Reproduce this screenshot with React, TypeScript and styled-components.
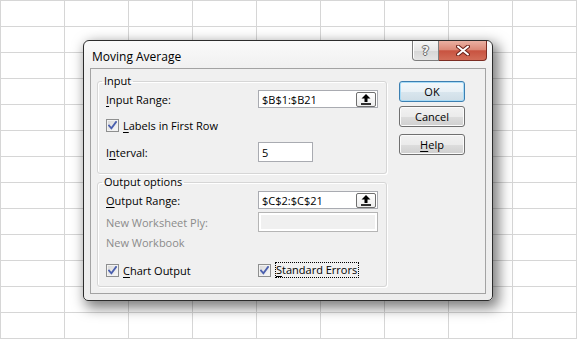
import styled, { createGlobalStyle } from "styled-components";

const GlobalStyle = createGlobalStyle`
  html, body {
    margin: 0;
    padding: 0;
  }

  body {
    font-family: "Open Sans", "Noto Sans", sans-serif;
    color: #000;
  }
`;

function CheckMark() {
  return (
    <svg width="9" height="9" viewBox="0 0 9 9">
      <path
        d="M1 4.6 L3.4 7.4 L8 1"
        fill="none"
        stroke="#4a5fae"
        strokeWidth="1.8"
        strokeLinecap="square"
      />
    </svg>
  );
}

function RefArrow() {
  return (
    <svg width="10" height="11" viewBox="0 0 10 11">
      <polygon points="5,0 9.5,4.5 6.5,4.5 6.5,8 3.5,8 3.5,4.5 0.5,4.5" fill="#000" />
      <rect x="0" y="9.2" width="10" height="1.6" fill="#000" />
    </svg>
  );
}

function CloseGlyph() {
  return (
    <svg width="14" height="11" viewBox="0 0 14 11">
      <path d="M2 1.5 L12 9.5 M12 1.5 L2 9.5" stroke="#6e241b" strokeWidth="4" strokeLinecap="round" />
      <path d="M2 1.5 L12 9.5 M12 1.5 L2 9.5" stroke="#fff" strokeWidth="2" strokeLinecap="round" />
    </svg>
  );
}

function Checkbox() {
  return (
    <CheckBoxFrame>
      <CheckMark />
    </CheckBoxFrame>
  );
}

function App() {
  return (
    <Desktop>
      <GlobalStyle />
      <Window>
        <TitleBar>
          <Title>Moving Average</Title>
          <Captions>
            <HelpCaption>?</HelpCaption>
            <CloseCaption>
              <CloseGlyph />
            </CloseCaption>
          </Captions>
        </TitleBar>
        <Client>
          <LeftColumn>
            <Group $bottom={11}>
              <Legend>Input</Legend>
              <Row $h={18} $mt={0}>
                <FieldLabel>
                  <Key>I</Key>nput Range:
                </FieldLabel>
                <TextBox $w={122} $h={18}>
                  $B$1:$B21
                  <RefButton>
                    <RefArrow />
                  </RefButton>
                </TextBox>
              </Row>
              <Row $h={18} $mt={8}>
                <Checkbox />
                <CheckText>
                  <Key>L</Key>abels in First Row
                </CheckText>
              </Row>
              <Row $h={20} $mt={8}>
                <FieldLabel>
                  I<Key>n</Key>terval:
                </FieldLabel>
                <TextBox $w={55} $h={20}>
                  5
                </TextBox>
              </Row>
            </Group>
            <Group $bottom={7}>
              <Legend>Output options</Legend>
              <Row $h={18} $mt={0}>
                <FieldLabel>
                  <Key>O</Key>utput Range:
                </FieldLabel>
                <TextBox $w={122} $h={18}>
                  $C$2:$C$21
                  <RefButton>
                    <RefArrow />
                  </RefButton>
                </TextBox>
              </Row>
              <Row $h={20} $mt={3}>
                <FieldLabel $disabled>New Worksheet Ply:</FieldLabel>
                <TextBox $w={121} $h={20} $disabled />
              </Row>
              <Row $h={20} $mt={0}>
                <FieldLabel $disabled>New Workbook</FieldLabel>
              </Row>
              <Row $h={18} $mt={9}>
                <CheckCell>
                  <Checkbox />
                  <CheckText>
                    <Key>C</Key>hart Output
                  </CheckText>
                </CheckCell>
                <Checkbox />
                <FocusText>
                  <Key>S</Key>tandard Errors
                </FocusText>
              </Row>
            </Group>
          </LeftColumn>
          <ButtonColumn>
            <DialogButton $default $mt={0}>OK</DialogButton>
            <DialogButton $mt={4}>Cancel</DialogButton>
            <DialogButton $mt={7}>
              <Key>H</Key>elp
            </DialogButton>
          </ButtonColumn>
        </Client>
      </Window>
    </Desktop>
  );
}

export default App;

const Desktop = styled.div`
  width: 577px;
  height: 339px;
  box-sizing: border-box;
  padding: 40px 0 0 83px;
  overflow: hidden;
  background-color: #ffffff;
  background-image: linear-gradient(to right, #d6d6d6 1px, transparent 1px),
    linear-gradient(to bottom, #d6d6d6 1px, transparent 1px);
  background-size: 64px 26px;
`;

const Window = styled.div`
  width: 410px;
  height: 261px;
  box-sizing: border-box;
  border: 1px solid #2c2c2c;
  border-radius: 6px 6px 5px 5px;
  background: linear-gradient(#fafafa, #f0f0f0 28px, #ededed);
  box-shadow: 4px 5px 13px 2px rgba(0, 0, 0, 0.5);
  display: flex;
  flex-direction: column;
`;

const TitleBar = styled.div`
  height: 27px;
  flex-shrink: 0;
  display: flex;
  padding: 0 5px 0 8px;
`;

const Title = styled.div`
  align-self: center;
  margin-top: 4px;
  font-size: 12px;
  line-height: 16px;
`;

const Captions = styled.div`
  margin-left: auto;
  align-self: flex-start;
  display: flex;
  height: 20px;
`;

const HelpCaption = styled.div`
  width: 27px;
  height: 20px;
  box-sizing: border-box;
  border: 1px solid #7d7d7d;
  border-top: none;
  border-radius: 0 0 0 4px;
  background: linear-gradient(#f7f7f7, #e6e6e6 50%, #d6d6d6 52%, #e4e4e4);
  box-shadow: inset 1px 0 0 #fff;
  display: flex;
  align-items: center;
  justify-content: center;
  font-family: "DejaVu Sans", sans-serif;
  font-weight: bold;
  font-size: 12px;
  color: #f2f2f2;
  text-shadow: 1px 0 0 #6a6a6a, -1px 0 0 #6a6a6a, 0 1px 0 #6a6a6a,
    0 -1px 0 #6a6a6a;
`;

const CloseCaption = styled.div`
  width: 48px;
  height: 20px;
  box-sizing: border-box;
  border: 1px solid #7b2c22;
  border-top: none;
  border-left: none;
  border-radius: 0 0 4px 0;
  background: linear-gradient(#eab0a2, #dc8a78 45%, #c85340 52%, #d26d58);
  display: flex;
  align-items: center;
  justify-content: center;
`;

const Client = styled.div`
  margin: 0 6px 6px;
  height: 226px;
  box-sizing: border-box;
  border: 1px solid #a3a3a3;
  background: #f0f0f0;
  display: flex;
`;

const LeftColumn = styled.div`
  display: flex;
  flex-direction: column;
  gap: 1px;
  padding: 5px 0 0 6px;
`;

const Group = styled.fieldset<{ $bottom: number }>`
  margin: 0;
  width: 290px;
  min-inline-size: 0;
  box-sizing: border-box;
  padding: 2px 8px ${(p) => p.$bottom}px 8px;
  border: 1px solid #d6d6d6;
  border-radius: 3px;
  box-shadow: inset 1px 1px 0 #ffffff, 1px 1px 0 #ffffff;
`;

const Legend = styled.legend`
  margin-left: -4px;
  padding: 0 2px;
  font-size: 11px;
  line-height: 14px;
`;

const Row = styled.div<{ $h: number; $mt: number }>`
  display: flex;
  align-items: center;
  height: ${(p) => p.$h}px;
  margin-top: ${(p) => p.$mt}px;
`;

const FieldLabel = styled.div<{ $disabled?: boolean }>`
  width: 152px;
  flex-shrink: 0;
  font-size: 11px;
  color: ${(p) => (p.$disabled ? "#8b8b8b" : "#000")};
`;

const Key = styled.span`
  text-decoration: underline;
  text-underline-offset: 2px;
`;

const TextBox = styled.div<{ $w: number; $h: number; $disabled?: boolean }>`
  width: ${(p) => p.$w}px;
  height: ${(p) => p.$h}px;
  box-sizing: border-box;
  display: flex;
  align-items: center;
  padding-left: 3px;
  border: 1px solid ${(p) => (p.$disabled ? "#b5b5b5" : "#a9abb1")};
  background: ${(p) => (p.$disabled ? "#f0f0f0" : "#ffffff")};
  box-shadow: ${(p) => (p.$disabled ? "inset 0 0 0 2px #ffffff" : "none")};
  font-size: 11px;
`;

const RefButton = styled.div`
  margin-left: auto;
  margin-right: 1px;
  width: 20px;
  height: 15px;
  box-sizing: border-box;
  border: 1px solid #6f6f6f;
  border-radius: 2px;
  background: linear-gradient(#ffffff, #ededed);
  display: flex;
  align-items: center;
  justify-content: center;
`;

const CheckBoxFrame = styled.span`
  width: 13px;
  height: 13px;
  flex-shrink: 0;
  box-sizing: border-box;
  border: 1px solid #8e8f8f;
  background: linear-gradient(135deg, #d6d6d6, #fafafa);
  box-shadow: inset 0 0 0 1px #f2f2f2;
  display: flex;
  align-items: center;
  justify-content: center;
`;

const CheckText = styled.span`
  margin-left: 4px;
  font-size: 11px;
`;

const CheckCell = styled.div`
  width: 152px;
  flex-shrink: 0;
  display: flex;
  align-items: center;
`;

const FocusText = styled.span`
  margin-left: 4px;
  font-size: 11px;
  line-height: 14px;
  border: 1px dotted #000;
  padding: 0 1px 0 0;
`;

const ButtonColumn = styled.div`
  display: flex;
  flex-direction: column;
  padding-top: 12px;
  margin-left: 12px;
`;

const DialogButton = styled.button<{ $default?: boolean; $mt: number }>`
  width: 66px;
  height: 21px;
  margin-top: ${(p) => p.$mt}px;
  box-sizing: border-box;
  padding: 0;
  border: 1px solid ${(p) => (p.$default ? "#3c7fb1" : "#707070")};
  border-radius: 3px;
  background: ${(p) =>
    p.$default
      ? "linear-gradient(#f3f8fb, #e9f1f6 50%, #d9e6ee 52%, #cfdde6)"
      : "linear-gradient(#f2f2f2, #ebebeb 50%, #dddddd 52%, #cfcfcf)"};
  box-shadow: inset 0 0 0 1px
    ${(p) => (p.$default ? "#a9dcf7" : "#fbfbfb")};
  font-family: inherit;
  font-size: 11px;
  color: #000;
`;
